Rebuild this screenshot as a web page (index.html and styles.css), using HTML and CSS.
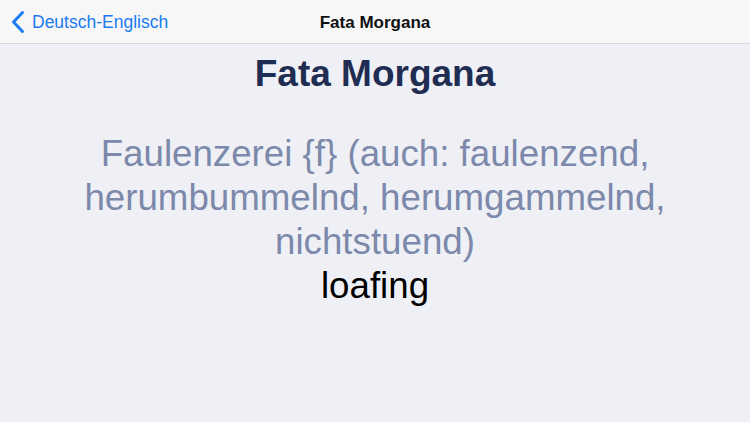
FILE: index.html
```
<!DOCTYPE html>
<html>
<head>
<meta charset="utf-8">
<link rel="stylesheet" href="styles.css">
</head>
<body>
<div class="nav">
  <div class="back">
    <svg class="chev" width="15" height="24" viewBox="0 0 15 24"><path d="M12.5 2.5 L3.5 12 L12.5 21.5" fill="none" stroke="#1b7bf0" stroke-width="3" stroke-linecap="round" stroke-linejoin="round"/></svg>
    <span>Deutsch-Englisch</span>
  </div>
  <div class="navtitle">Fata Morgana</div>
</div>
<main class="content">
  <h1 class="title">Fata Morgana</h1>
  <p class="de">Faulenzerei {f} (auch: faulenzend, herumbummelnd, herumgammelnd, nichtstuend)</p>
  <p class="en">loafing</p>
</main>
</body>
</html>
```
FILE: styles.css
```
html, body { margin: 0; padding: 0; }
body {
  width: 750px; height: 422px; overflow: hidden;
  background: #eff0f5;
  font-family: "Liberation Sans", Arial, sans-serif;
}
.nav {
  position: relative;
  height: 44px;
  background: #f7f7f8;
  border-bottom: 1px solid #d6d6da;
  display: flex; align-items: center;
  padding-top: 1px; box-sizing: border-box;
}
.back {
  display: flex; align-items: center;
  padding-left: 10px;
  color: #1b7bf0; font-size: 17.5px;
}
.chev { margin-right: 7px; }
.navtitle {
  position: absolute; left: 0; right: 0; top: 1px; height: 44px;
  display: flex; align-items: center; justify-content: center;
  font-size: 17px; font-weight: 600; color: #111;
  pointer-events: none;
}
.content { text-align: center; }
.title {
  margin: 9px 0 0; font-size: 37px; line-height: 42px; font-weight: bold; color: #1f2d52;
}
.de {
  margin: 37px auto 0; width: 640px;
  font-size: 36.7px; line-height: 44px; color: #7c89ab;
}
.en {
  margin: 0; font-size: 36.7px; line-height: 44px; color: #000;
}
```
